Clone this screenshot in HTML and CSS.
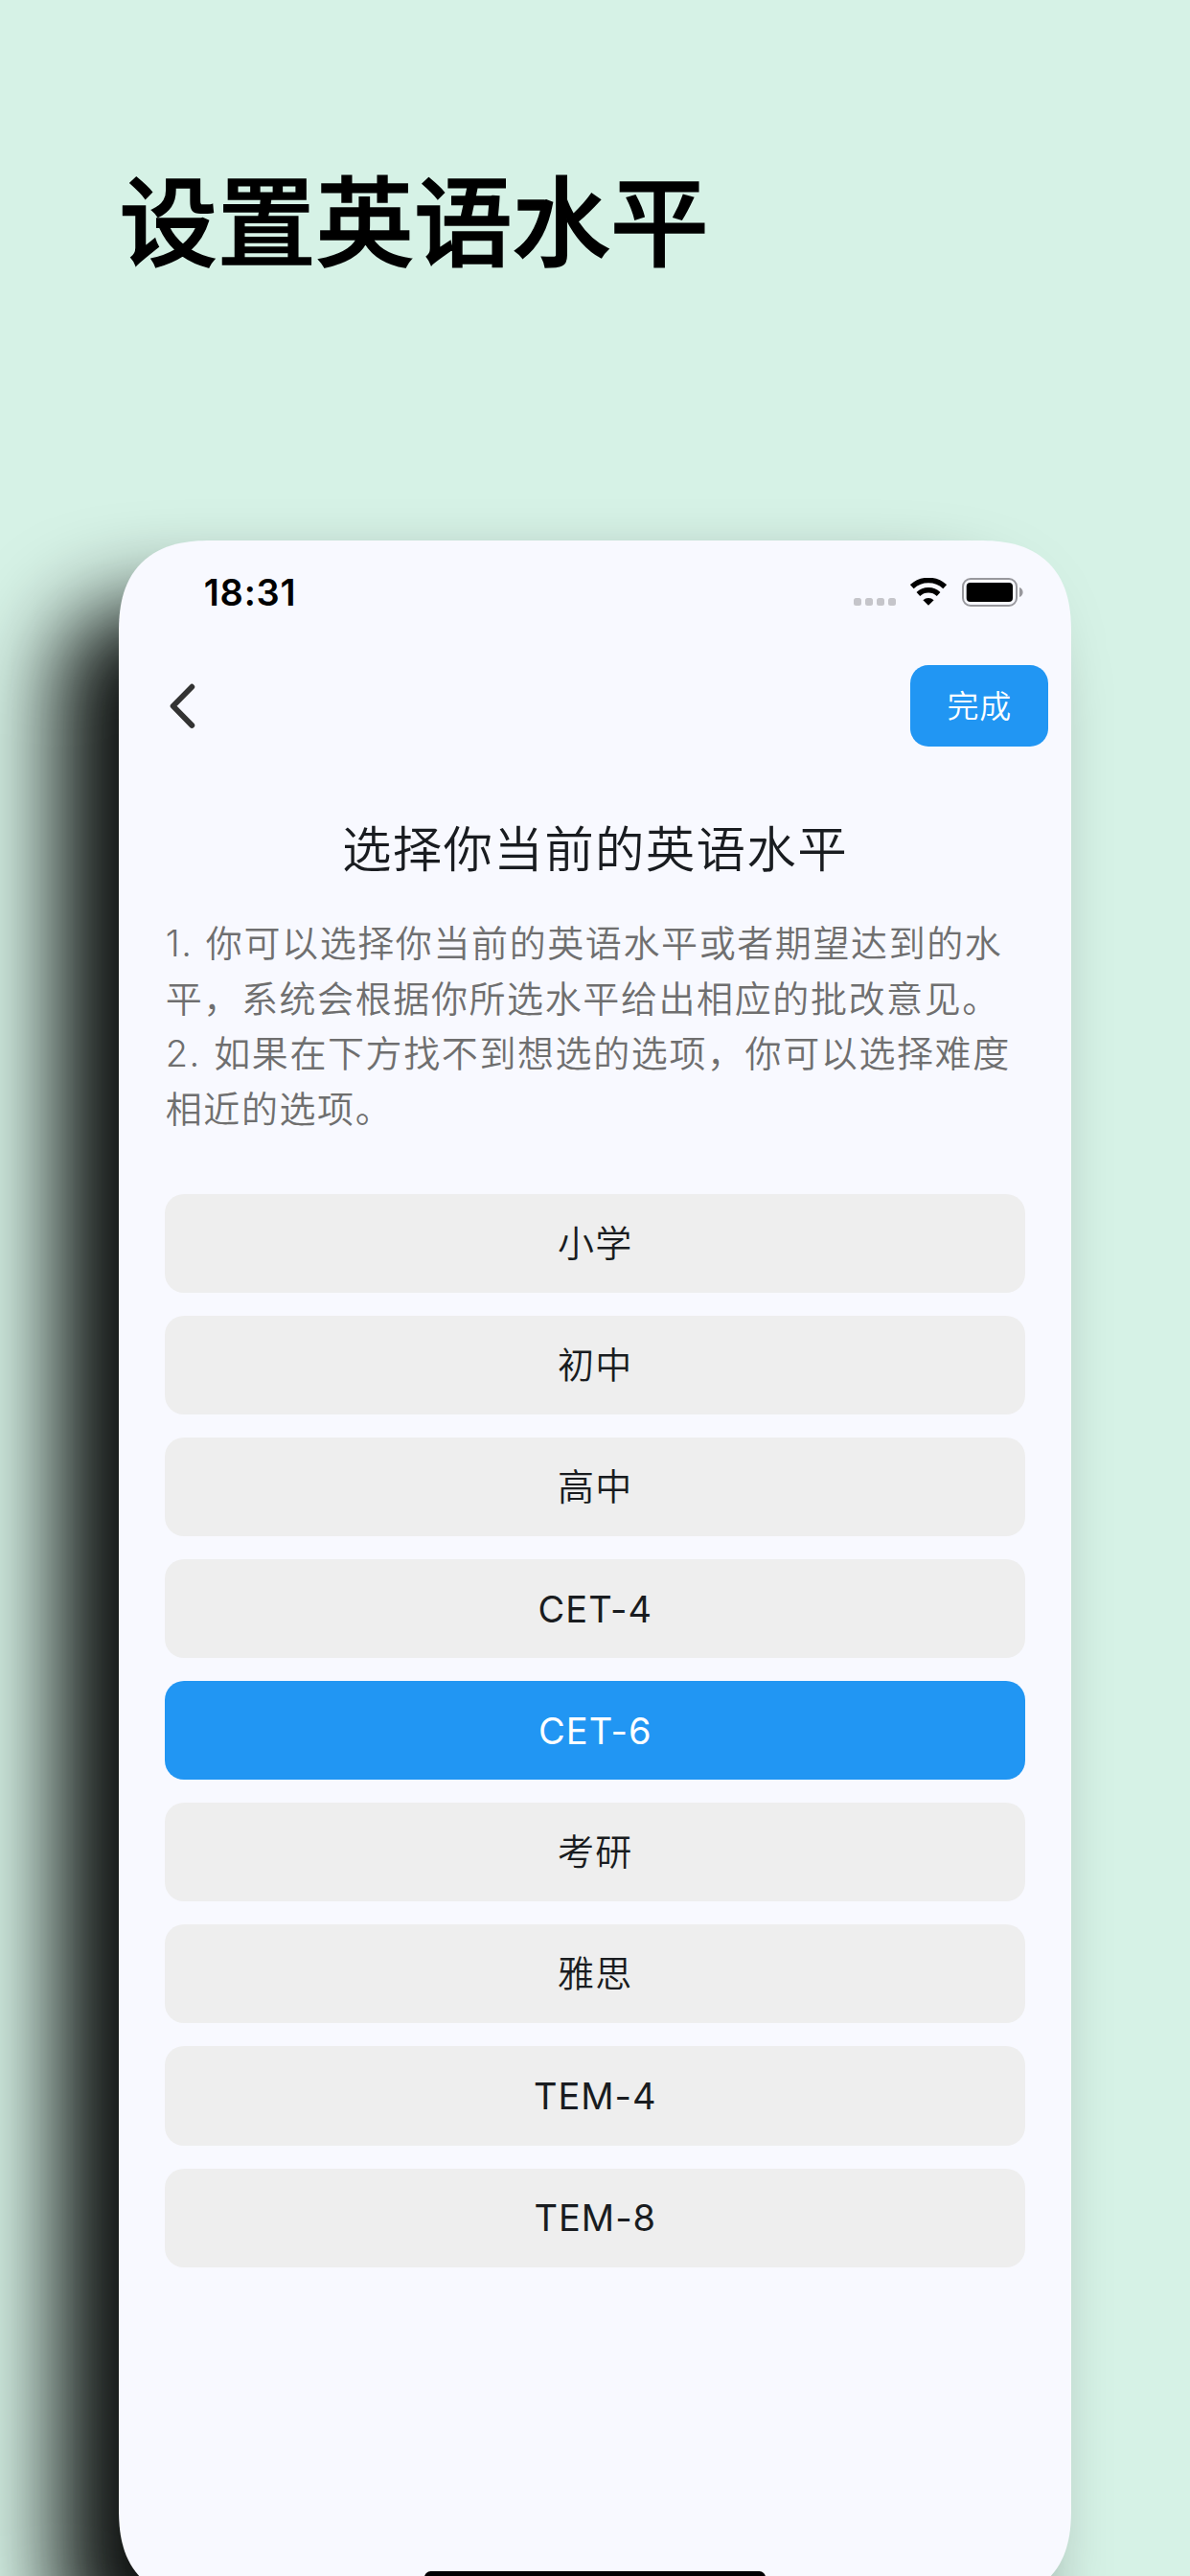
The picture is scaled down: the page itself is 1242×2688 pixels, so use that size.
FILE: index.html
```html
<!DOCTYPE html>
<html lang="zh-CN">
<head>
    <meta charset="UTF-8">
    <meta name="viewport" content="width=device-width, initial-scale=1.0">
    <title>设置英语水平</title>
    <link rel="stylesheet" href="styles.css">
</head>
<body>
    <h1 class="page-title">设置英语水平</h1>

    <div class="phone">
        <div class="status-bar">
            <div class="time">18:31</div>
            <div class="status-icons">
                <div class="signal"><span></span><span></span><span></span><span></span></div>
                <svg class="wifi" width="38" height="29" viewBox="0 0 38 29">
                    <path d="M1.8 9.2A25.5 25.5 0 0 1 36.2 9.2" fill="none" stroke="#000" stroke-width="5.6"/>
                    <path d="M8.4 16.9A15.6 15.6 0 0 1 29.6 16.9" fill="none" stroke="#000" stroke-width="5.4"/>
                    <path d="M19 28.8L13.4 23.2A8.2 8.2 0 0 1 24.6 23.2Z"/>
                </svg>
                <svg class="battery" width="64" height="30" viewBox="0 0 64 30">
                    <rect x="1" y="1" width="56" height="28" rx="8" fill="none" stroke="#98989d" stroke-width="2"/>
                    <rect x="4.7" y="5" width="48.3" height="20" rx="4"/>
                    <path d="M60 10C64.8 11.5 64.8 18.5 60 20Z" fill="#98989d"/>
                </svg>
            </div>
        </div>

        <div class="nav">
            <a class="back" href="#">
                <svg width="28" height="48" viewBox="0 0 28 48">
                    <path d="M23.3 3.7L3.6 23.8L23.3 43.9" fill="none" stroke="#333" stroke-width="5.8" stroke-linecap="round" stroke-linejoin="round"/>
                </svg>
            </a>
            <button class="done-btn">完成</button>
        </div>

        <h2 class="heading">选择你当前的英语水平</h2>
        <p class="tips">
            1. 你可以选择你当前的英语水平或者期望达到的水<br>
            平，系统会根据你所选水平给出相应的批改意见。<br>
            2. 如果在下方找不到想选的选项，你可以选择难度<br>
            相近的选项。
        </p>

        <div class="levels">
            <button class="level zh">小学</button>
            <button class="level zh">初中</button>
            <button class="level zh">高中</button>
            <button class="level">CET-4</button>
            <button class="level selected">CET-6</button>
            <button class="level zh">考研</button>
            <button class="level zh">雅思</button>
            <button class="level">TEM-4</button>
            <button class="level">TEM-8</button>
        </div>

        <div class="home-indicator"></div>
    </div>
</body>
</html>
```

FILE: styles.css
```css
* {
    box-sizing: border-box;
}
body {
    margin: 0;
    height: 2688px;
    overflow: hidden;
    background: #d6f2e6;
    font-family: Inter, "Noto Sans CJK SC", sans-serif;
    color: #191c20;
}
.page-title {
    margin: 0;
    height: 564px;
    padding: 158px 0 0 124.5px;
    font-size: 102.5px;
    line-height: 150px;
    font-weight: 500;
    -webkit-text-stroke: 1.6px #000;
    color: #000;
}
.phone {
    width: 993.6px;
    height: 2150px;
    margin-left: 124.2px;
    display: flex;
    flex-direction: column;
    background: #f8f9ff;
    border-radius: 96px;
    corner-shape: superellipse(1.3);
    box-shadow: -65px 67px 92px rgba(0, 0, 0, 0.94);
}
.status-bar {
    display: flex;
    justify-content: space-between;
    height: 130px;
    padding: 39px 50px 0 88.5px;
    color: #000;
}
.time {
    font-size: 38px;
    line-height: 31px;
    font-weight: 600;
    letter-spacing: 0.8px;
}
.status-icons {
    display: flex;
    height: 30px;
}
.signal {
    display: flex;
    gap: 4px;
    padding-top: 21px;
}
.signal span {
    width: 8px;
    height: 8px;
    border-radius: 2.5px;
    background: #c5c5ca;
}
.wifi {
    margin-left: 15.5px;
}
.battery {
    margin-left: 15.5px;
}
.nav {
    display: flex;
    justify-content: space-between;
    align-items: center;
    height: 85px;
    padding: 0 23.6px 0 53px;
}
.back {
    display: flex;
}
.done-btn {
    width: 144px;
    height: 85px;
    padding: 0 0 4px;
    border: none;
    border-radius: 19px;
    background: #2196f3;
    color: #fff;
    font-family: inherit;
    font-size: 33px;
    font-weight: 350;
    letter-spacing: 0.6px;
}
.heading {
    margin: 71px 0 0;
    font-size: 51.5px;
    line-height: 72px;
    font-weight: 350;
    letter-spacing: 1.3px;
    text-align: center;
}
.tips {
    margin: 34px 0 0;
    padding-left: 48.5px;
    font-size: 38px;
    line-height: 57.6px;
    font-weight: 350;
    letter-spacing: 1.6px;
    word-spacing: 1px;
    white-space: nowrap;
    color: #6f6f6f;
}
.levels {
    display: flex;
    flex-direction: column;
    gap: 24px;
    margin: 59.4px 47.4px 0 48px;
}
.level {
    height: 103.1px;
    padding: 0;
    border: none;
    border-radius: 20px;
    background: #eee;
    color: #191c20;
    font-family: inherit;
    font-size: 38px;
    font-weight: 380;
    letter-spacing: 1px;
}
/* CJK glyphs sit lower than the latin ones */
.level.zh {
    padding-bottom: 6px;
    font-weight: 350;
    letter-spacing: 1.4px;
}
.level.selected {
    background: #2196f3;
    color: #fff;
}
.home-indicator {
    width: 356px;
    height: 13px;
    margin: auto auto 18px;
    border-radius: 7px;
    background: #000;
}
```
